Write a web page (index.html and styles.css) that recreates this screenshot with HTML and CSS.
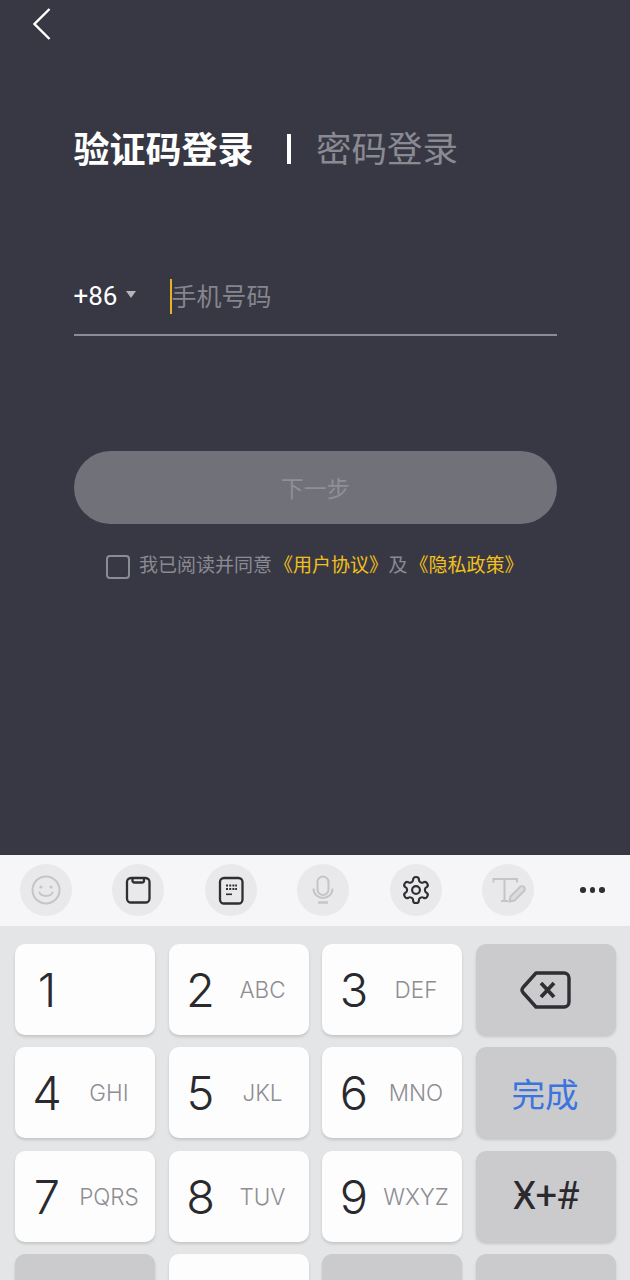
FILE: index.html
```html
<!DOCTYPE html>
<html lang="zh-CN">
<head>
    <meta charset="UTF-8">
    <meta name="viewport" content="width=device-width, initial-scale=1.0">
    <title>验证码登录</title>
    <link rel="stylesheet" href="styles.css">
</head>
<body>
    <main class="login">
        <svg class="back-icon" width="18" height="32" viewBox="0 0 18 32">
            <path d="M16.5 1 L1.5 16 L16.5 31" fill="none" stroke="#fff" stroke-width="2.4"/>
        </svg>

        <div class="login-tabs">
            <span class="tab-active">验证码登录</span>
            <span class="tab-divider"></span>
            <span class="tab-other">密码登录</span>
        </div>

        <div class="phone-row">
            <span class="country-code">+86</span>
            <span class="country-arrow"></span>
            <span class="text-caret"></span>
            <span class="phone-placeholder">手机号码</span>
        </div>

        <div class="next-button">下一步</div>

        <div class="agreement">
            <span class="agree-box"></span>
            <span class="agree-text">我已阅读并同意<span class="agree-link">《用户协议》</span>及<span class="agree-link">《隐私政策》</span></span>
        </div>
    </main>

    <section class="keyboard">
        <div class="kb-toolbar">
            <span class="kb-tool">
                <svg width="52" height="52" viewBox="0 0 52 52" fill="none" stroke="#c5c5c7" stroke-width="2">
                    <circle cx="26" cy="26" r="13.5"/>
                    <circle cx="21" cy="23" r="1.6" fill="#c5c5c7" stroke="none"/>
                    <circle cx="31" cy="23" r="1.6" fill="#c5c5c7" stroke="none"/>
                    <path d="M19.5 28.5 C21 33 31 33 32.5 28.5" stroke-linecap="round"/>
                </svg>
            </span>
            <span class="kb-tool">
                <svg width="52" height="52" viewBox="0 0 52 52" fill="none" stroke="#2e2e33" stroke-width="2.3">
                    <rect x="15" y="14" width="22.5" height="24.5" rx="4"/>
                    <path d="M20.5 14 v2.5 a2 2 0 0 0 2 2 h7.5 a2 2 0 0 0 2 -2 V14"/>
                </svg>
            </span>
            <span class="kb-tool">
                <svg width="52" height="52" viewBox="0 0 52 52" fill="#2e2e33">
                    <rect x="15" y="14" width="22.5" height="25.5" rx="4" fill="none" stroke="#2e2e33" stroke-width="2.3"/>
                    <rect x="21" y="20.5" width="2" height="2"/>
                    <rect x="24.2" y="20.5" width="2" height="2"/>
                    <rect x="27.4" y="20.5" width="2" height="2"/>
                    <rect x="30.2" y="20.5" width="1.8" height="2"/>
                    <rect x="21" y="24" width="2" height="2"/>
                    <rect x="24.2" y="24" width="2" height="2"/>
                    <rect x="27.4" y="24" width="2" height="2"/>
                    <rect x="30.2" y="24" width="1.8" height="2"/>
                    <rect x="21" y="29.5" width="6" height="1.6"/>
                </svg>
            </span>
            <span class="kb-tool">
                <svg width="52" height="52" viewBox="0 0 52 52" fill="none" stroke="#c5c5c7" stroke-width="2">
                    <rect x="20.5" y="12.5" width="11" height="18.5" rx="5.5"/>
                    <path d="M16.5 24.5 C16.5 37 35.5 37 35.5 24.5"/>
                    <path d="M21 38.5 H31" stroke-width="2.4"/>
                </svg>
            </span>
            <span class="kb-tool">
                <svg width="52" height="52" viewBox="0 0 52 52" fill="none" stroke="#2e2e33" stroke-width="1.65">
                    <g transform="translate(10.4 10.4) scale(1.3)">
                        <path d="M12.22 2h-.44a2 2 0 0 0-2 2v.18a2 2 0 0 1-1 1.73l-.43.25a2 2 0 0 1-2 0l-.15-.08a2 2 0 0 0-2.73.73l-.22.38a2 2 0 0 0 .73 2.73l.15.1a2 2 0 0 1 1 1.72v.51a2 2 0 0 1-1 1.74l-.15.09a2 2 0 0 0-.73 2.73l.22.38a2 2 0 0 0 2.73.73l.15-.08a2 2 0 0 1 2 0l.43.25a2 2 0 0 1 1 1.73V20a2 2 0 0 0 2 2h.44a2 2 0 0 0 2-2v-.18a2 2 0 0 1 1-1.73l.43-.25a2 2 0 0 1 2 0l.15.08a2 2 0 0 0 2.73-.73l.22-.39a2 2 0 0 0-.73-2.73l-.15-.08a2 2 0 0 1-1-1.74v-.5a2 2 0 0 1 1-1.74l.15-.09a2 2 0 0 0 .73-2.73l-.22-.38a2 2 0 0 0-2.73-.73l-.15.08a2 2 0 0 1-2 0l-.43-.25a2 2 0 0 1-1-1.73V4a2 2 0 0 0-2-2z"/>
                        <circle cx="12" cy="12" r="3"/>
                    </g>
                </svg>
            </span>
            <span class="kb-tool">
                <svg width="52" height="52" viewBox="0 0 52 52" fill="none" stroke="#c5c5c7" stroke-width="2">
                    <path d="M11.5 18.5 V15 H35 V18.5"/>
                    <path d="M22.5 15 V37 M19 37 H26"/>
                    <path d="M27.5 37.5 L28.5 32.5 L38 23 C39 22 41 22 42 23 C43 24 43 26 42 27 L32.5 36.5 Z" fill="#dcdcde"/>
                </svg>
            </span>
            <span class="kb-more">
                <i></i><i></i><i></i>
            </span>
        </div>

        <div class="kb-keys">
            <div class="key"><span class="key-num">1</span></div>
            <div class="key"><span class="key-num">2</span><span class="key-abc">ABC</span></div>
            <div class="key"><span class="key-num">3</span><span class="key-abc">DEF</span></div>
            <div class="key key-fn">
                <svg width="52" height="40" viewBox="0 0 52 40" fill="none" stroke="#2e2e33" stroke-width="3.4" stroke-linejoin="round">
                    <path d="M16 3 H44 a5 5 0 0 1 5 5 V32 a5 5 0 0 1 -5 5 H16 L3 22.5 a4 4 0 0 1 0 -5 Z"/>
                    <path d="M21 13 L34 27 M34 13 L21 27" stroke-width="3.8"/>
                </svg>
            </div>

            <div class="key"><span class="key-num">4</span><span class="key-abc">GHI</span></div>
            <div class="key"><span class="key-num">5</span><span class="key-abc">JKL</span></div>
            <div class="key"><span class="key-num">6</span><span class="key-abc">MNO</span></div>
            <div class="key key-fn"><span class="key-done">完成</span></div>

            <div class="key"><span class="key-num">7</span><span class="key-abc">PQRS</span></div>
            <div class="key"><span class="key-num">8</span><span class="key-abc">TUV</span></div>
            <div class="key"><span class="key-num">9</span><span class="key-abc">WXYZ</span></div>
            <div class="key key-fn"><span class="key-symbols">Ӿ+#</span></div>

            <div class="key key-fn"></div>
            <div class="key"></div>
            <div class="key key-fn"></div>
            <div class="key key-fn"></div>
        </div>
    </section>
</body>
</html>
```

FILE: styles.css
```css
html, body {
    margin: 0;
    height: 1280px;
    overflow: hidden;
}

body {
    font-family: "Noto Sans CJK SC", "Noto Sans", sans-serif;
    background-color: #383844;
}

.login {
    height: 855px;
    box-sizing: border-box;
    padding: 8px 73px 0 73.5px;
}

.back-icon {
    display: block;
    margin-left: -41px;
}

.login-tabs {
    display: flex;
    align-items: center;
    height: 50px;
    margin-top: 82px;
    font-size: 36px;
    line-height: 50px;
}

.tab-active {
    color: #fff;
    font-weight: 700;
}

.tab-divider {
    width: 4px;
    height: 30px;
    margin: 4px 25.5px 0 33px;
    background-color: #fff;
}

.tab-other {
    color: #8a8a92;
    font-size: 35.5px;
}

.phone-row {
    display: flex;
    align-items: center;
    height: 38px;
    margin-top: 105px;
    padding-bottom: 19px;
    border-bottom: 2px solid #8b8b93;
}

.country-code {
    color: #fff;
    font-family: "Roboto", sans-serif;
    font-size: 26px;
}

.country-arrow {
    width: 0;
    height: 0;
    margin: 0 34px 0 9px;
    border-left: 5.5px solid transparent;
    border-right: 5.5px solid transparent;
    border-top: 7px solid #b4b4ba;
    transform: translateY(-2px);
}

.text-caret {
    width: 2px;
    height: 35px;
    margin-right: -1px;
    background-color: #e8b228;
}

.phone-placeholder {
    margin-bottom: 2px;
    color: #85858d;
    font-size: 25px;
}

.next-button {
    height: 73px;
    margin-top: 115px;
    border-radius: 37px;
    background-color: #71717a;
    color: #8f8f97;
    font-size: 23px;
    line-height: 73px;
    text-align: center;
}

.agreement {
    display: flex;
    align-items: center;
    margin-top: 26px;
    padding-left: 32.5px;
    color: #8a8a92;
    font-size: 19px;
}

.agree-box {
    box-sizing: border-box;
    width: 24px;
    height: 24px;
    margin-right: 9px;
    border: 2px solid #8b8b93;
    border-radius: 4px;
}

.agree-text {
    margin-bottom: 6px;
}

.agree-link {
    margin: 0 0.5px 0 2px;
    color: #f3c01b;
}

.keyboard {
    height: 425px;
    overflow: hidden;
    background-color: #e4e5e7;
}

.kb-toolbar {
    display: flex;
    align-items: center;
    gap: 40.4px;
    box-sizing: border-box;
    height: 71px;
    padding: 0 0 1px 20px;
    background-color: #f6f6f8;
}

.kb-tool {
    width: 52px;
    height: 52px;
    border-radius: 50%;
    background-color: #e9e9eb;
}

.kb-tool svg {
    display: block;
}

.kb-more {
    display: flex;
    gap: 4px;
    margin-left: 6px;
}

.kb-more i {
    width: 5.5px;
    height: 5.5px;
    border-radius: 50%;
    background-color: #2e2e33;
}

.kb-keys {
    display: grid;
    grid-template-columns: repeat(4, 140px);
    grid-auto-rows: 91px;
    column-gap: 13.5px;
    row-gap: 12.33px;
    padding: 18px 0 0 15px;
}

.key {
    display: grid;
    grid-template-columns: 64px 60px;
    align-items: center;
    border-radius: 10px;
    background-color: #fdfdfe;
    box-shadow: 0 2px 3px rgba(0, 0, 0, 0.14);
}

.key-num {
    color: #2a2a2e;
    font-family: "Inter", sans-serif;
    font-size: 47px;
    font-weight: 300;
    text-align: center;
}

.key-abc {
    justify-self: center;
    color: #8e8e92;
    font-family: "Inter", sans-serif;
    font-size: 22.5px;
    font-weight: 300;
    white-space: nowrap;
}

.key-fn {
    display: flex;
    align-items: center;
    justify-content: center;
    background-color: #cbcbcd;
}

.key-done {
    margin-right: 1px;
    color: #3a74de;
    font-size: 33.5px;
}

.key-symbols {
    color: #2a2a2e;
    font-family: "Roboto", "Noto Sans", sans-serif;
    font-size: 38px;
    letter-spacing: -1px;
}
```
